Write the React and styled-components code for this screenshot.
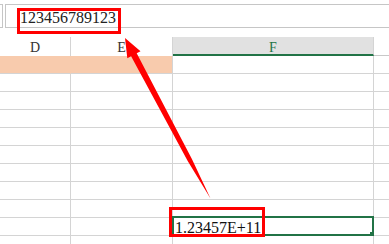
import React from "react";
import styled, { createGlobalStyle } from "styled-components";

const GlobalStyle = createGlobalStyle`
  html, body { margin: 0; padding: 0; background: #fff; overflow: hidden; }
  * { box-sizing: border-box; }
`;

const Root = styled.div`
  position: relative;
  width: 389px;
  height: 244px;
  overflow: hidden;
  background: #fff;
  font-family: "Liberation Serif", "DejaVu Serif", serif;
`;

const FormulaBar = styled.div`
  display: flex;
  gap: 2px;
  margin-top: 4px;
  height: 24px;
`;

const NameBox = styled.div`
  width: 3px;
  border: 1px solid #c6c6c6;
  border-left: none;
`;

const FormulaInput = styled.div`
  flex: 1;
  display: flex;
  align-items: center;
  padding-left: 14px;
  padding-top: 3px;
  border: 1px solid #c6c6c6;
  border-right: none;
  font-size: 16px;
  color: #222;
`;

/* red annotation frame drawn around the text it marks */
const Marked = styled.span`
  position: relative;
  &::after {
    content: "";
    position: absolute;
    top: ${(p) => p.$t}px;
    right: ${(p) => p.$r}px;
    bottom: ${(p) => p.$b}px;
    left: ${(p) => p.$l}px;
    border: 3px solid #ff0000;
    pointer-events: none;
    z-index: 2;
  }
`;

const Sheet = styled.div`
  display: grid;
  margin-top: 9px;
  grid-template-columns: 71px 102px 201px 1fr;
  grid-template-rows: 19px;
  grid-auto-rows: 18px;
`;

const HeaderCell = styled.div`
  display: flex;
  align-items: center;
  justify-content: center;
  padding-top: ${(p) => (p.$active ? "4px" : "3px")};
  font-size: 14px;
  color: ${(p) => (p.$active ? "#217346" : "#333")};
  background: ${(p) => (p.$active ? "#e1e1e1" : "#fff")};
  border-right: ${(p) => (p.$last ? "none" : "1px solid #d4d4d4")};
  border-bottom: ${(p) =>
    p.$active ? "2px solid #217346" : p.$last ? "1px solid #c8c8c8" : "none"};
`;

const Cell = styled.div`
  position: relative;
  display: flex;
  align-items: center;
  padding-left: 2px;
  padding-top: 3px;
  font-size: 16px;
  color: #111;
  background: ${(p) => p.$fill || "#fff"};
  border-right: ${(p) =>
    p.$last ? "none" : `1px solid ${p.$fill && p.$blend ? p.$fill : "#d4d4d4"}`};
  border-bottom: 1px solid #d4d4d4;
`;

const Selection = styled.div`
  position: absolute;
  top: -2px;
  left: -1px;
  right: -1px;
  bottom: -1px;
  border: 2px solid #217346;
  pointer-events: none;
`;

const FillHandle = styled.div`
  position: absolute;
  right: -3px;
  bottom: -3px;
  width: 5px;
  height: 5px;
  background: #217346;
`;

const ArrowLayer = styled.svg`
  position: absolute;
  inset: 0;
  width: 389px;
  height: 244px;
  pointer-events: none;
  z-index: 3;
`;

const columns = ["D", "E", "F", ""];
const ROWS = 11;

export default function App() {
  const rows = [];
  for (let r = 1; r <= ROWS; r++) {
    columns.forEach((c, i) => {
      const peach = r === 1 && (c === "D" || c === "E");
      const selected = r === 10 && c === "F";
      rows.push(
        <Cell
          key={`${r}-${i}`}
          $fill={peach ? "#f8cbad" : undefined}
          $blend={c === "D"}
          $last={i === 3}
        >
          {selected && (
            <>
              <Marked $t={-12} $r={-4} $b={0} $l={-6}>
                1.23457E+11
              </Marked>
              <Selection>
                <FillHandle />
              </Selection>
            </>
          )}
        </Cell>
      );
    });
  }

  return (
    <Root>
      <GlobalStyle />
      <FormulaBar>
        <NameBox />
        <FormulaInput>
          <Marked $t={-1} $r={-5} $b={-7} $l={-3}>
            123456789123
          </Marked>
        </FormulaInput>
      </FormulaBar>
      <Sheet>
        {columns.map((c, i) => (
          <HeaderCell key={c + i} $active={c === "F"} $last={i === 3}>
            {c}
          </HeaderCell>
        ))}
        {rows}
      </Sheet>
      <ArrowLayer viewBox="0 0 389 244">
        <polygon
          fill="#ff0000"
          points="125,38 140.5,51.3 136.7,53.3 191.9,158.9 210.5,198.5 187.7,161.1 131.1,56.3 127.3,58.3"
        />
      </ArrowLayer>
    </Root>
  );
}
